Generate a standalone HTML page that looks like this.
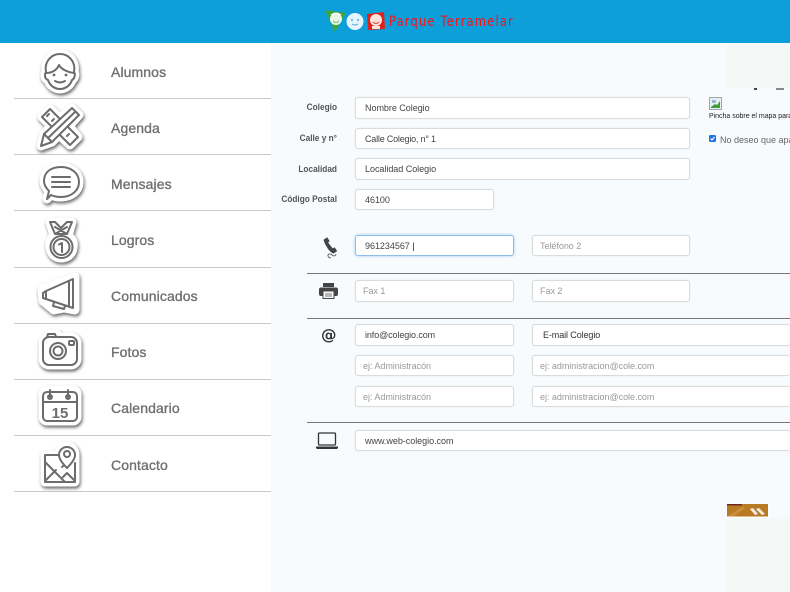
<!DOCTYPE html>
<html><head><meta charset="utf-8"><style>
*{box-sizing:border-box}
html,body{margin:0;padding:0}
body{width:790px;height:592px;overflow:hidden;position:relative;background:#fff;font-family:"Liberation Sans",sans-serif}
#w{position:absolute;left:0;top:0;width:790px;height:592px;filter:blur(.3px);overflow:hidden}
.a{position:absolute}
.hdr{left:0;top:0;width:790px;height:43px;background:#0c9fda}
.main{left:271px;top:43px;width:519px;height:549px;background:#f7fbfe}
.grn{background:#f4f8f7}
.dv{left:14px;width:257px;height:1px;background:#c9c9c9}
.mi{left:111px;font-size:14px;color:#707070;line-height:18px;white-space:nowrap;-webkit-text-stroke:.35px #707070;letter-spacing:.1px}
.ic{left:38px;width:44px;height:44px;overflow:visible;filter:drop-shadow(1.5px 2.5px 1.6px rgba(0,0,0,.6))}
.s{fill:#fff;stroke:#fff;stroke-width:9;stroke-linejoin:round}
.l{fill:none;stroke:#6c6c6c;stroke-width:2;stroke-linecap:round;stroke-linejoin:round}
.lb{right:453px;width:90px;text-align:right;font-size:9px;font-weight:bold;color:#555;line-height:14px;white-space:nowrap;transform-origin:right center;transform:scaleX(.92)}
.f{height:21.5px;background:#fff;border:1px solid #d9dcdd;box-shadow:0 0 1px #ddd;border-radius:3px;font-size:9px;line-height:20px;padding-left:9px;color:#444;white-space:nowrap;overflow:hidden;letter-spacing:-.03px}
.p{color:#999;padding-left:7px}
.hr{left:307px;width:483px;height:1px;background:#777}
</style></head><body><div id="w">
<div class="a main"></div>
<div class="a grn" style="left:726px;top:44px;width:64px;height:45px"></div>
<div class="a" style="left:754px;top:88px;width:3px;height:1.5px;background:#444"></div>
<div class="a" style="left:776px;top:88px;width:8px;height:1.5px;background:#888"></div>
<div class="a grn" style="left:726px;top:517px;width:64px;height:75px"></div>
<div class="a hdr"></div>

<svg class="a" style="left:325px;top:9px" width="64" height="23" viewBox="0 0 64 23">
<path d="M0 1L21 4L10 23Z" fill="#3da63a"/><circle cx="11" cy="10" r="6" fill="#e9f6e6"/><path d="M6 6q5-4 10 0" stroke="#fff" fill="none"/><path d="M8 12q3 3 6 0" stroke="#6fb86b" fill="none"/>
<circle cx="30" cy="12.500" r="8.500" fill="#e6f5fd"/><circle cx="27" cy="11" r="1" fill="#4ba9dd"/><circle cx="33" cy="11" r="1" fill="#4ba9dd"/><path d="M27 15q3 2 6 0" stroke="#4ba9dd" fill="none"/>
<path d="M42 5L59 3L60 20L43 21Z" fill="#e2211c"/><circle cx="51" cy="11" r="6" fill="#fbe3dc"/><path d="M47 17h8v3h-8z" fill="#fbe3dc"/><path d="M48 13q3 3 6 0" stroke="#d33" fill="none"/>
</svg>
<div class="a" style="left:389px;top:13px;font-family:'DejaVu Sans',sans-serif;font-size:14px;line-height:18px;color:#f5121c;white-space:nowrap;letter-spacing:1.5px;transform-origin:left center;transform:scaleX(.815)">Parque Terramelar</div>

<div class="a dv" style="top:98px"></div><div class="a dv" style="top:154px"></div><div class="a dv" style="top:210px"></div><div class="a dv" style="top:267px"></div><div class="a dv" style="top:323px"></div><div class="a dv" style="top:379px"></div><div class="a dv" style="top:435px"></div><div class="a dv" style="top:491px"></div>

<div class="a mi" style="top:63px">Alumnos</div>
<div class="a mi" style="top:119px">Agenda</div>
<div class="a mi" style="top:175px">Mensajes</div>
<div class="a mi" style="top:231px">Logros</div>
<div class="a mi" style="top:287px">Comunicados</div>
<div class="a mi" style="top:343px">Fotos</div>
<div class="a mi" style="top:399px">Calendario</div>
<div class="a mi" style="top:456px">Contacto</div>

<svg class="a ic" style="top:50px" viewBox="0 0 44 44">
<path class="s" d="M8 22c-2-10 5-18 14-18s16 8 14 18c2 3 0 7-2 8-2 6-7 9-12 9s-10-3-12-9c-3-1-4-5-2-8z"/>
<path class="l" d="M8 22c-2-10 5-18 14-18s16 8 14 18c2 3 0 7-2 8-2 6-7 9-12 9s-10-3-12-9c-3-1-4-5-2-8z"/>
<path class="l" d="M8 23c6 0 11-3 13-8 2 4 8 7 15 8"/><circle cx="16" cy="25" r="1.400" fill="#6c6c6c"/><circle cx="28" cy="25" r="1.400" fill="#6c6c6c"/><path class="l" d="M17 31q5 3 10 0"/></svg>

<svg class="a ic" style="top:105px" viewBox="0 0 44 44">
<path class="s" d="M12 4L22 13L34 3L41 10L31 21L40 32L32 40L21 30L14 37L3 41L6 29L13 21L4 12Z"/>
<path class="l" d="M12 4L4 12L32 40L40 32Z"/><path class="l" stroke-width="1.500" d="M11 9l-2 2M16 14l-2 2M21 19l-2 2M26 24l-2 2M31 29l-2 2"/>
<path class="l" style="fill:#fff" d="M34 3L41 10L14 37L3 41L6 29Z"/><path class="l" d="M10 33L37 7M6 29l8 8"/></svg>

<svg class="a ic" style="top:162px" viewBox="0 0 44 44">
<path class="s" d="M9 37l2-8c-3-3-5-7-5-10 0-9 7-14 17-14s18 6 18 15-8 15-18 15c-4 0-8-1-10-2z"/>
<path class="l" d="M9 37l2-8c-3-3-5-7-5-10 0-9 7-14 17-14s18 6 18 15-8 15-18 15c-4 0-8-1-10-2z"/><path class="l" d="M14 15h18M14 20h18M14 25h18"/></svg>

<svg class="a ic" style="top:219px" viewBox="0 0 44 44">
<path class="s" d="M12 3h22l-4 14c5 3 6 7 5 12-1 7-6 10-12 10s-10-4-11-10c-1-5 0-9 4-12z"/>
<path class="l" d="M12 3h5l6 6 6-6h5l-5 12h-12zM17 15l12-7M29 15l-12-7"/><circle class="l" cx="23.500" cy="28" r="11"/><circle class="l" stroke-width="1.200" cx="23.500" cy="28" r="8"/><path class="l" stroke-width="1.500" d="M21 25.500l3-1.500v9"/></svg>

<svg class="a ic" style="top:272px" viewBox="0 0 44 44">
<path class="s" d="M4 17L37 5V38L26 36L16 38L5 29Z"/>
<path class="l" d="M8 19L35 7V36L8 27z"/><path class="l" d="M31 9V34"/><path class="l" d="M8 19L5 21V26L8 27"/><path class="l" d="M16 30l-1 4 11 3 1-3"/></svg>

<svg class="a ic" style="top:330px" viewBox="0 0 44 44">
<path class="s" d="M11 7l1-3h7l1 3h13a6 6 0 0 1 6 6v16a6 6 0 0 1-6 6H11a6 6 0 0 1-6-6V13a6 6 0 0 1 6-6z"/>
<rect class="l" x="5" y="7" width="34" height="28" rx="6"/><path class="l" d="M9 7l1-3h7l1 3"/><circle class="l" cx="20" cy="21" r="8"/><circle class="l" cx="20" cy="21" r="4.500"/><rect class="l" stroke-width="1.500" x="31" y="11" width="5" height="4" rx="1"/></svg>

<svg class="a ic" style="top:385px" viewBox="0 0 44 44">
<rect class="s" x="5" y="5" width="34" height="31" rx="4"/>
<rect class="l" x="5" y="7" width="34" height="29" rx="4"/><path class="l" d="M5 17h34M12 5v7M30 5v7"/><circle class="l" stroke-width="1.200" cx="12" cy="12" r="2"/><circle class="l" stroke-width="1.200" cx="30" cy="12" r="2"/>
<text x="22" y="33" text-anchor="middle" font-family="Liberation Sans,sans-serif" font-weight="bold" font-size="15" fill="#6c6c6c">15</text></svg>

<svg class="a ic" style="top:441px" viewBox="0 0 44 44">
<path class="s" d="M7 14H21C21 8 25 5 29 5s8 3 8 9V41H7Z"/>
<path class="l" d="M21 14H7V41H37V22"/><path class="l" d="M7 21L27 41M7 40L18 29M24 26l5-4M29 32L37 40M25 36l4-4"/><path class="l" style="fill:#fff" d="M29 27c-5-5-8-9-8-13a8 8 0 0 1 16 0c0 4-3 8-8 13z"/><circle class="l" cx="29" cy="13" r="3"/></svg>

<div class="a lb" style="top:100px">Colegio</div>
<div class="a lb" style="top:131px">Calle y n°</div>
<div class="a lb" style="top:162px">Localidad</div>
<div class="a lb" style="top:192px">Código Postal</div>

<div class="a f" style="left:355px;top:97px;width:335px">Nombre Colegio</div>
<div class="a f" style="left:355px;top:127.5px;width:335px;letter-spacing:-.2px">Calle Colegio, n° 1</div>
<div class="a f" style="left:355px;top:158px;width:335px">Localidad Colegio</div>
<div class="a f" style="left:355px;top:188.5px;width:139px">46100</div>

<svg class="a" style="left:709px;top:97px" width="13" height="13" viewBox="0 0 13 13"><rect x=".5" y=".5" width="12" height="12" fill="#e9eef0" stroke="#9aa"/><path d="M2 10l4-3 2 1 3-4v7H2z" fill="#3f9d3a"/><path d="M3 3h4v3H3z" fill="#8fb7d8"/></svg>
<div class="a" style="left:709px;top:111px;font-size:7px;line-height:12px;color:#222;white-space:nowrap;letter-spacing:-.02px">Pincha sobre el mapa para</div>
<div class="a" style="left:709px;top:135px;width:7px;height:7px;background:#1a73e8;border-radius:1.5px"></div>
<svg class="a" style="left:709px;top:135px" width="7" height="7"><path d="M1.5 3.500l1.500 1.500 2.500-3" stroke="#fff" stroke-width="1.200" fill="none"/></svg>
<div class="a" style="left:720px;top:133px;font-size:9px;line-height:14px;color:#666;white-space:nowrap">No deseo que apa</div>

<svg class="a" style="left:321px;top:237px" width="18" height="22" viewBox="0 0 18 22" fill="none" stroke="#444"><path d="M3 3l3-2 2 3-1.500 1.500 5 6.500 2-1 2 3-3 2C9 15 5 9 3 3z" fill="#444"/><path d="M10 21c-3 0-4-3-2-4 2-1 3 2 5 2 1 0 2-1 2-2" stroke-width=".8"/></svg>

<div class="a f" style="left:355px;top:234.5px;width:159px;border-color:#8dbdec;box-shadow:0 0 3px #a5cdf2">961234567 <span style="color:#222">|</span></div>
<div class="a f p" style="left:532px;top:234.5px;width:158px">Teléfono 2</div>
<div class="a hr" style="top:273px"></div>

<svg class="a" style="left:319px;top:283px" width="19" height="16" viewBox="0 0 19 16"><path d="M4 0h11v4H4z" fill="#444"/><rect x="0" y="4.500" width="19" height="8.500" rx="2" fill="#444"/><rect x="4" y="8" width="11" height="7.500" fill="#f7fbfe" stroke="#444"/><path d="M6 11h7M6 13h7" stroke="#444" stroke-width=".8"/></svg>
<div class="a f p" style="left:355px;top:280px;width:159px">Fax 1</div>
<div class="a f p" style="left:532px;top:280px;width:158px">Fax 2</div>
<div class="a hr" style="top:318px"></div>

<div class="a" style="left:321px;top:325px;font-family:'DejaVu Sans',sans-serif;font-size:15.5px;font-weight:bold;line-height:20px;color:#333">@</div>
<div class="a f" style="left:355px;top:324px;width:159px;letter-spacing:-.1px">info@colegio.com</div>
<div class="a f" style="left:532px;top:324px;width:258px;padding-left:10px;border-right:0;color:#333;letter-spacing:-.1px">E-mail Colegio</div>
<div class="a f p" style="left:355px;top:354.5px;width:159px">ej: Administracón</div>
<div class="a f p" style="left:532px;top:354.5px;width:258px;border-right:0">ej: administracion@cole.com</div>
<div class="a f p" style="left:355px;top:385.5px;width:159px">ej: Administracón</div>
<div class="a f p" style="left:532px;top:385.5px;width:258px;border-right:0">ej: administracion@cole.com</div>
<div class="a hr" style="top:422px"></div>

<svg class="a" style="left:316px;top:432px" width="22" height="18" viewBox="0 0 22 18"><rect x="2.500" y="1" width="17" height="12" rx="1" fill="none" stroke="#333" stroke-width="1.300"/><path d="M0 14.500h22v1.500l-1 1H1l-1-1z" fill="#333"/></svg>
<div class="a f" style="left:355px;top:429.5px;width:435px;border-right:0">www.web-colegio.com</div>

<svg class="a" style="left:726px;top:503px" width="44" height="15" viewBox="0 0 44 15"><rect x="0" y="0" width="44" height="15" fill="#fbfcfc"/><rect x="1" y="1" width="41" height="12.500" fill="#b97a24"/><path d="M1 1h15v1.500H1z" fill="#6b2a1f"/><path d="M1 13.500L16 4l3 1L8 13.500z" fill="#c98d3d"/><path d="M24 6l3-1 5 6-3 1zM30 6l3-1 6 6-3 1z" fill="#f2eee0"/></svg>
</div></body></html>
